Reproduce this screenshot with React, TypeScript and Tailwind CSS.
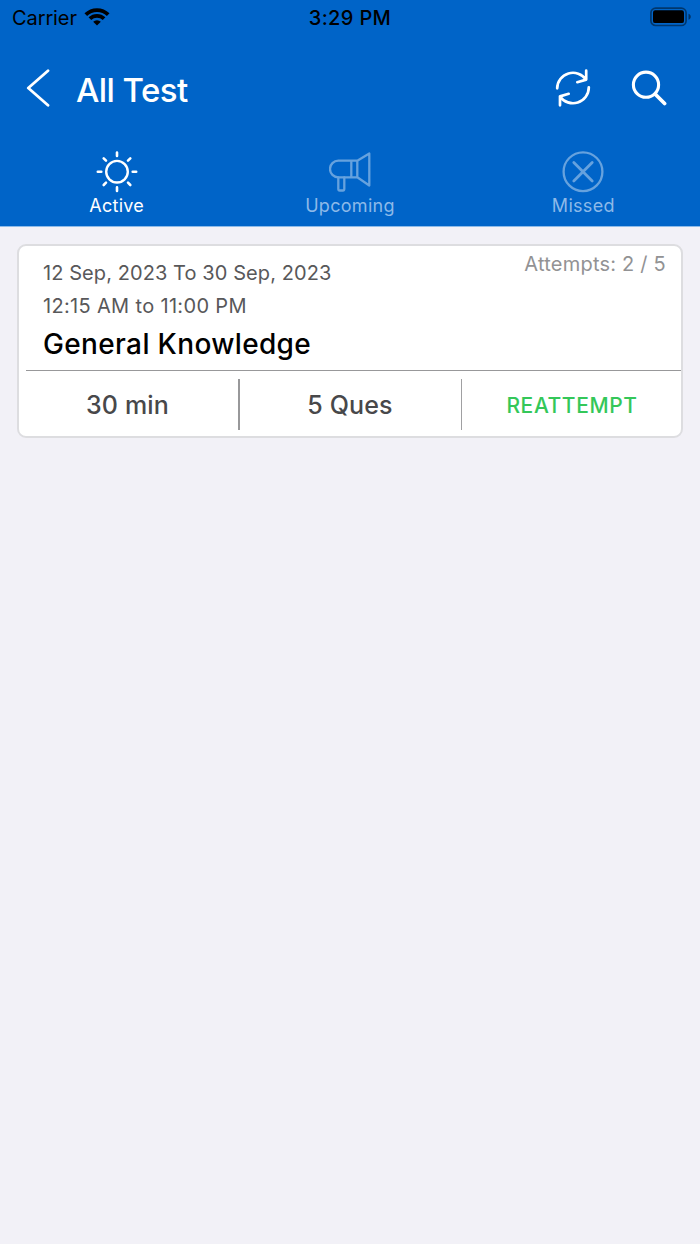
import type { ReactNode } from 'react'
import clsx from 'clsx'

function StatusBar() {
  return (
    <div className="grid h-9 grid-cols-[1fr_auto_1fr] items-center pr-[9px] pl-3 text-[20px] text-black">
      <div className="flex items-center gap-[7px]">
        <span className="tracking-[-0.1px]">Carrier</span>
        <svg className="mb-[3px]" width="26" height="19" viewBox="0 0 25 19" fill="none" stroke="currentColor" strokeWidth="3.8">
          <path d="M1.3 7.6a16 16 0 0 1 22.4 0" />
          <path d="M5.4 11.7a10.2 10.2 0 0 1 14.2 0" />
          <path d="M12.5 18.4 8.7 14.7a5.5 5.5 0 0 1 7.6 0Z" fill="currentColor" stroke="none" />
        </svg>
      </div>
      <span className="mr-[3px] text-center font-medium tracking-[0.35px]">3:29 PM</span>
      <svg className="mb-[2px] justify-self-end" width="41" height="20" viewBox="0 0 41 20">
        <rect x="0.9" y="1.1" width="35.2" height="17.4" rx="4.8" fill="none" stroke="black" strokeOpacity="0.45" strokeWidth="1.7" />
        <rect x="3" y="3.3" width="31" height="12.8" rx="2.2" />
        <path d="M38.5 6.8c3 1.2 3 4.8 0 6Z" fillOpacity="0.5" />
      </svg>
    </div>
  )
}

function NavBar() {
  return (
    <div className="flex h-[106px] items-center pr-[33px] pl-[26px] text-white">
      <svg className="mb-[2px]" width="24" height="38" viewBox="0 0 24 38" fill="none" stroke="currentColor" strokeWidth="2.8" strokeLinecap="round" strokeLinejoin="round">
        <path d="M22 1.7 2.3 19 22 36.3" />
      </svg>
      <h1 className="mt-[3px] ml-[26px] text-[33px] font-medium tracking-[-0.55px]">All Test</h1>
      <svg className="mb-[2px] ml-auto" width="36" height="38" viewBox="0 0 36 38" fill="none" stroke="currentColor" strokeWidth="2.7" strokeLinecap="round" strokeLinejoin="round">
        <path d="M2.2 19.3A15.8 15.8 0 0 1 31 10.6M31.2 1.7v8.9l-8.9 2.6" />
        <path d="M33.8 18.3A15.8 15.8 0 0 1 5 27.4M5 36.3v-8.9l8.7-2.6" />
      </svg>
      <svg className="mb-[2px] ml-10" width="36" height="38" viewBox="0 0 36 38" fill="none" stroke="currentColor" strokeLinecap="round">
        <circle cx="15" cy="15.7" r="12.6" strokeWidth="3.1" />
        <path d="m24.3 25.2 9.3 9.3" strokeWidth="3.7" />
      </svg>
    </div>
  )
}

type TabProps = { label: string; active?: boolean; children: ReactNode }

function Tab({ label, active, children }: TabProps) {
  return (
    <div className={clsx('flex flex-col items-center pt-[9px]', active ? 'text-white' : 'text-[#8cb9e8]')}>
      <svg
        className={active ? 'text-white' : 'text-[#66a2de]'}
        width="42"
        height="42"
        viewBox="0 0 42 42"
        fill="none"
        stroke="currentColor"
        strokeWidth="2.3"
        strokeLinecap="round"
        strokeLinejoin="round"
      >
        {children}
      </svg>
      <span className="text-[18px] leading-[25px] tracking-[0.3px]">{label}</span>
    </div>
  )
}

function Tabs() {
  return (
    <div className="grid h-[84px] grid-cols-3">
      <Tab label="Active" active>
        <circle cx="21" cy="20.7" r="10.8" strokeWidth="2.4" />
        <path d="M21 1.5V5M21 36.4v3.5M1.8 20.7h3.5M36.7 20.7h3.5M7.7 7.4 10 9.7M32 31.7l2.3 2.3M7.7 34l2.300-2.300M32 9.7l2.300-2.300" strokeWidth="2.6" />
      </Tab>
      <Tab label="Upcoming">
        <path d="M28.3 9.7h-19a8.3 8.3 0 0 0 0 16.6h19ZM22.3 9.7v16.6M28.3 9.7l12-7.2v32l-12-8.2" />
        <path d="M9.3 26.300v11.800q0 1.400 1.400 1.400h3.200q1.400 0 1.400-1.400V26.300" />
      </Tab>
      <Tab label="Missed">
        <circle cx="21" cy="20.7" r="19.4" />
        <path d="m11.8 11.5 18.4 18.4M30.2 11.5 11.8 29.9" strokeWidth="2.8" />
      </Tab>
    </div>
  )
}

function TestCard() {
  return (
    <article className="mx-[17px] mt-[17px] h-[194px] rounded-[9px] border-2 border-[#dddde0] bg-white">
      <div className="flex h-[124px] justify-between pr-[15px] pl-6">
        <div className="pt-[11px] text-[20px] leading-[33px] text-[#58585a]">
          <p className="tracking-[0.08px]">12 Sep, 2023 To 30 Sep, 2023</p>
          <p className="tracking-[0.33px]">12:15 AM to 11:00 PM</p>
          <h2 className="text-[28px] leading-[42px] font-medium tracking-[0.35px] text-black">General Knowledge</h2>
        </div>
        <p className="pt-[2px] text-[20px] leading-[32px] tracking-[0.22px] text-[#929294]">Attempts: 2 / 5</p>
      </div>
      <div className="ml-[7px] border-t border-[#98989a]" />
      <div className="grid h-[65px] grid-cols-[219px_224px_1fr] items-center pt-[2px] text-center text-[25px] font-medium tracking-[0.15px] text-[#48484a]">
        <span className="pt-[2px] pr-[2px]">30 min</span>
        <span className="flex h-[51px] items-center justify-center border-r border-l-2 border-r-[#a0a0a2] border-l-[#98989a] pt-[2px] pr-px">5 Ques</span>
        <button className="pt-[2px] pl-px text-[21px] font-medium tracking-[0.6px] text-[#34c759]">REATTEMPT</button>
      </div>
    </article>
  )
}

export default function App() {
  return (
    <main className="min-h-[1244px] bg-[#f2f1f7] font-['Inter',sans-serif]">
      <header className="border-b border-[#8dbbe9] bg-[#0064c8]">
        <StatusBar />
        <NavBar />
        <Tabs />
      </header>
      <TestCard />
    </main>
  )
}
